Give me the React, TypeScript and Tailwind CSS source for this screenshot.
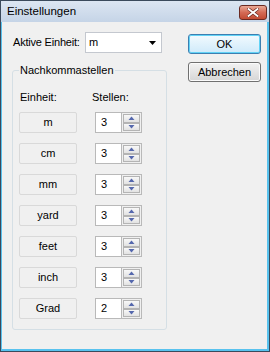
import React from 'react';

const units = [
  { name: 'm', digits: 3 },
  { name: 'cm', digits: 3 },
  { name: 'mm', digits: 3 },
  { name: 'yard', digits: 3 },
  { name: 'feet', digits: 3 },
  { name: 'inch', digits: 3 },
  { name: 'Grad', digits: 2 },
];

const SpinButton: React.FC<{ up?: boolean }> = ({ up }) => (
  <div className="w-[17px] h-[10px] border border-[#b4b4b4] bg-gradient-to-b from-[#f8f8f8] to-[#e2e2e2] flex items-center justify-center">
    <svg width="7" height="4" viewBox="0 0 7 4">
      {up ? (
        <path d="M0.5 4 L3.5 0.5 L6.5 4 Z" fill="#5568ad" />
      ) : (
        <path d="M0.5 0 L6.5 0 L3.5 3.5 Z" fill="#5568ad" />
      )}
    </svg>
  </div>
);

const Spinner: React.FC<{ value: number }> = ({ value }) => (
  <div className="w-[47px] h-[21px] flex border border-[#b9b9b9] bg-white">
    <div className="flex-1 flex items-center pl-[5px] text-[11px] text-black">{value}</div>
    <div className="flex flex-col border-l border-[#b9b9b9] bg-[#f0f0f0] p-px">
      <SpinButton up />
      <SpinButton />
    </div>
  </div>
);

const App: React.FC = () => {
  return (
    <div className="w-[270px] h-[352px] flex flex-col bg-[#3b4a5c] p-px font-['Liberation_Sans',Arial,sans-serif] text-[11px] text-black">
      {/* title bar */}
      <div className="h-[21px] flex items-center justify-between bg-gradient-to-b from-[#dce6f2] to-[#c5d4e7] pl-[6px] pr-[2px]">
        <span className="text-[11.5px] leading-none mt-[1px]">Einstellungen</span>
        <div className="w-[28px] h-[15px] mt-[2px] rounded-[3px] border border-[#6b2a22] bg-gradient-to-b from-[#e9a896] via-[#d46a55] to-[#c24a32] flex items-center justify-center">
          <svg width="12" height="9" viewBox="0 0 12 9">
            <path d="M1.5 1 L10.5 8 M10.5 1 L1.5 8" stroke="#6b2a22" strokeWidth="3.2" strokeLinecap="square" />
            <path d="M1.5 1 L10.5 8 M10.5 1 L1.5 8" stroke="#ffffff" strokeWidth="1.8" strokeLinecap="square" />
          </svg>
        </div>
      </div>

      {/* client area */}
      <div className="flex-1 flex bg-[#f0f0f0] border-l border-r-2 border-b-2 border-[#58c2ee] pt-[10px]">
        <div className="ml-[10px] w-[155px] flex flex-col">
          <div className="h-[21px] flex items-center">
            <span className="w-[73px] pl-[1px] tracking-[-0.2px]">Aktive Einheit:</span>
            <div className="w-[77px] h-[21px] bg-white border border-[#c4c8cf] flex items-center justify-between pl-[3px] pr-[5px]">
              <span>m</span>
              <svg width="7" height="4" viewBox="0 0 7 4">
                <path d="M0 0 L7 0 L3.5 4 Z" fill="#000" />
              </svg>
            </div>
          </div>

          <fieldset className="mt-[11px] border border-[#d5dfe5] rounded-[3px] px-[6px] pb-[10px]">
            <legend className="px-px leading-[13px]">Nachkommastellen</legend>
            <div className="flex mt-[14px] leading-[13px]">
              <span className="w-[73px] pl-px">Einheit:</span>
              <span>Stellen:</span>
            </div>
            <div className="flex flex-col gap-[10px] mt-[8px]">
              {units.map((u) => (
                <div key={u.name} className="flex items-center">
                  <div className="w-[58px] h-[21px] rounded-[2px] border border-[#d9d9d9] bg-[#f0f0f0] flex items-center justify-center">
                    {u.name}
                  </div>
                  <div className="ml-[18px]">
                    <Spinner value={u.digits} />
                  </div>
                </div>
              ))}
            </div>
          </fieldset>
        </div>

        <div className="ml-[21px] pt-[2px] flex flex-col gap-[8px]">
          <button className="w-[73px] h-[20px] rounded-[3px] border border-[#3c7fb1] bg-gradient-to-b from-[#f2fafe] to-[#cfeafa] shadow-[inset_0_0_0_1px_#62d3f6] leading-none">
            OK
          </button>
          <button className="w-[73px] h-[20px] rounded-[3px] border border-[#707070] bg-gradient-to-b from-[#f2f2f2] to-[#d6d6d6] shadow-[inset_0_0_0_1px_#fbfbfb] leading-none">
            Abbrechen
          </button>
        </div>
      </div>
    </div>
  );
};

export default App;
